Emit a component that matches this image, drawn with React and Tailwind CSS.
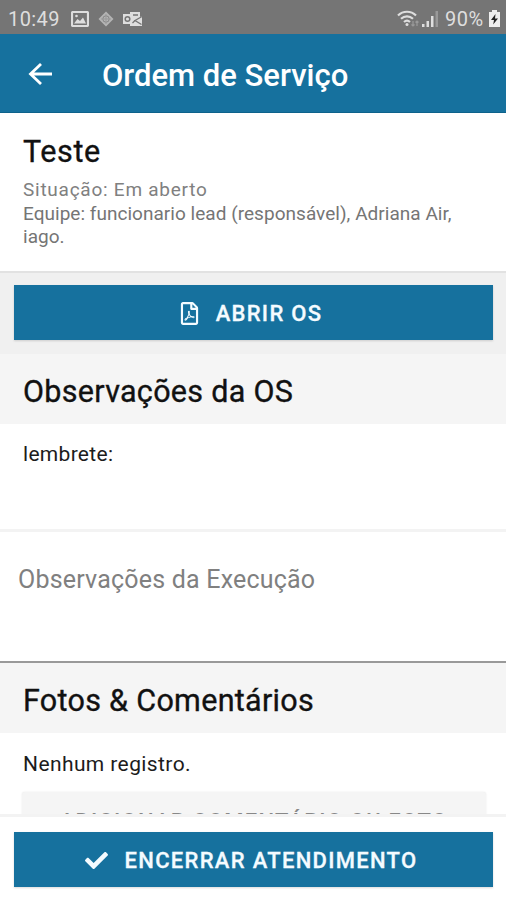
import { FaCheck, FaRegFilePdf } from 'react-icons/fa'

function StatusBar() {
  return (
    <div className="h-[34px] shrink-0 bg-[#757575] text-[#dedede] flex items-center pl-2 pr-[6px] pt-[3px]">
      <span className="text-[20px] leading-none tracking-[0.4px] w-[63px]">10:49</span>
      <svg className="w-[18px] h-[16px]" viewBox="0 0 18 16" fill="none" stroke="currentColor" strokeWidth="2.200">
        <rect x="1" y="1" width="16" height="14" rx="1" />
        <path d="M3 12.500l3.500-4.500 2.500 2 3-3.500 3 6z" fill="currentColor" stroke="none" />
        <circle cx="5.5" cy="5" r="1.3" fill="currentColor" stroke="none" />
      </svg>
      <svg className="w-4 h-4 ml-[9px] text-[#b4b4b4]" viewBox="0 0 16 16" fill="none" stroke="currentColor">
        <path d="M8 .5L15.500 8 8 15.500.5 8z" fill="currentColor" stroke="none" />
        <circle cx="8" cy="8" r="3.2" stroke="#858585" />
        <path d="M8 3v10M3 8h10" stroke="#999" />
      </svg>
      <svg className="w-5 h-4 ml-[9px]" viewBox="0 0 20 16" fill="none" stroke="currentColor">
        <path d="M7 1h10v5l2-1v10H7z" fill="currentColor" stroke="none" />
        <path d="M10 4h5M19 5.500L12 9.500l6.500 4M9.500 12L12 9.500" stroke="#757575" strokeWidth="1.300" />
        <path d="M0 3h9v10H0z" fill="currentColor" stroke="none" />
        <circle cx="4.500" cy="8" r="2.300" stroke="#757575" strokeWidth="1.500" />
      </svg>
      <div className="ml-auto flex items-center">
        <svg className="w-[23px] h-[17px]" viewBox="0 0 23 17" fill="none" stroke="currentColor" strokeWidth="2.200">
          <path d="M1 5.500c5-5 13-5 18 0M4 8.800c3.500-3.300 8.500-3.300 12 0M7 12c2-1.800 4-1.800 6 0" />
          <circle cx="10" cy="14.500" r="1.500" fill="currentColor" stroke="none" />
          <path d="M16 11v5M14.500 14.500L16 16l1.500-1.500M20 16v-5M18.500 12.500L20 11l1.500 1.500" stroke="#9a9a9a" strokeWidth="1.200" />
        </svg>
        <svg className="w-[16px] h-[16px] ml-[2px]" viewBox="0 0 16 16" fill="currentColor">
          <path d="M0 13h2.500v3H0zM4.500 10H7v6H4.500zM9 5h2.500v11H9z" />
          <path d="M13.500 0H16v16h-2.500z" fill="#999" />
        </svg>
        <span className="text-[20px] leading-none ml-[7px] w-[44px] tracking-[0.5px]">90%</span>
        <svg className="w-[11px] h-[17px]" viewBox="0 0 11 17" fill="#eee">
          <path d="M3 0h5v2h3v15H0V2h3z" />
          <path d="M6.500 4L2 10h3l-.8 4.500L9 8.500H6z" fill="#222" />
        </svg>
      </div>
    </div>
  )
}

function Header() {
  return (
    <div className="h-[79px] shrink-0 bg-[#16719e] border-b border-[#0d628b] text-white flex items-center">
      <svg className="ml-[28px] w-[24px] h-[22px] mt-[1px]" viewBox="0 0 24 22" fill="none" stroke="currentColor" strokeWidth="2.800">
        <path d="M13 1L2.500 11 13 21M2.500 11H24" />
      </svg>
      <h1 className="ml-[50px] mt-[5px] text-[31px] leading-none font-medium whitespace-nowrap">Ordem de Serviço</h1>
    </div>
  )
}

function SectionTitle({ children }) {
  return (
    <h2 className="bg-[#f5f5f5] h-[70px] px-[23px] pt-[7px] flex items-center text-[30.5px] leading-none tracking-[0.3px] text-[#111] whitespace-nowrap [-webkit-text-stroke:0.35px]">
      {children}
    </h2>
  )
}

function PrimaryButton({ icon, className, children }) {
  return (
    <button className={`w-full h-[55px] bg-[#16719e] text-[#f4fbff] shadow-[0_1px_2px_rgba(0,0,0,0.15)] pt-[2px] flex items-center justify-center text-[22px] leading-none font-medium whitespace-nowrap [-webkit-text-stroke:0.3px] ${className}`}>
      {icon}
      <span>{children}</span>
    </button>
  )
}

function App() {
  return (
    <div className="w-[506px] h-[900px] overflow-hidden flex flex-col bg-white text-[#1c1c1c] font-[Roboto,sans-serif]">
      <StatusBar />
      <Header />

      <div className="h-[701px] shrink-0 overflow-hidden">
        <div className="h-[158px] pl-[23px] pr-10 pt-[22px]">
          <div className="text-[30.5px] leading-[34px] tracking-[0.6px] text-[#111] [-webkit-text-stroke:0.35px]">Teste</div>
          <div className="mt-[9px] text-[19px] leading-[24px] tracking-[0.75px] text-[#808080]">Situação: Em aberto</div>
          <div className="text-[19px] leading-[23px] tracking-[0.03px] text-[#757575] whitespace-nowrap">
            Equipe: funcionario lead (responsável), Adriana Air,
            <br />
            iago.
          </div>
        </div>

        <div className="h-[83px] bg-[#f0f0f0] border-t-2 border-[#e2e2e2] px-[14px] pr-[13px] pt-[12px]">
          <PrimaryButton className="tracking-[1.3px] pr-[7px]" icon={<FaRegFilePdf size={23} className="mr-[15px]" />}>
            ABRIR OS
          </PrimaryButton>
        </div>

        <SectionTitle>Observações da OS</SectionTitle>
        <div className="h-[108px] px-[23px] pt-[17px] text-[21px] leading-[26px] tracking-[0.3px] border-b-[3px] border-[#f3f3f3]">
          lembrete:
        </div>

        <div className="h-[131px] px-[18px] pt-[32px] text-[25px] leading-[32px] tracking-[0.2px] text-[#808080] border-b-2 border-[#999]">
          Observações da Execução
        </div>

        <SectionTitle>Fotos &amp; Comentários</SectionTitle>
        <div className="pl-[22px] pr-5 pt-[18px]">
          <div className="text-[21px] leading-[26px] tracking-[0.4px] pl-px">Nenhum registro.</div>
          <button className="mt-[15px] w-full h-[55px] pt-[5px] rounded-[3px] bg-[#f5f5f5] shadow-[0_0_2px_rgba(0,0,0,0.1)] text-[#888] text-[22px] leading-none font-medium tracking-[1.2px] whitespace-nowrap">
            ADICIONAR COMENTÁRIO OU FOTO
          </button>
        </div>
      </div>

      <div className="h-[86px] shrink-0 bg-white border-t-[3px] border-[#f3f3f3] pl-[14px] pr-[13px] pt-[15px]">
        <PrimaryButton className="tracking-[1.3px] pr-[5px]" icon={<FaCheck size={23} className="mr-[17px]" />}>
          ENCERRAR ATENDIMENTO
        </PrimaryButton>
      </div>
    </div>
  )
}

export default App
